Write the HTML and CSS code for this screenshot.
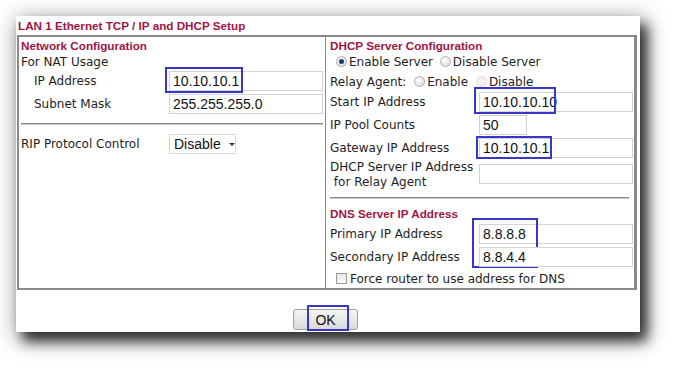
FILE: index.html
```html
<!DOCTYPE html>
<html lang="en">
<head>
<meta charset="UTF-8">
<title>LAN 1 Ethernet TCP / IP and DHCP Setup</title>
<link rel="stylesheet" href="styles.css">
</head>
<body>
<div class="page">
  <div class="card">
    <div class="title">LAN 1 Ethernet TCP / IP and DHCP Setup</div>

    <div class="panel">
      <!-- left: network / RIP -->
      <div class="col col-left">
        <div class="head">Network Configuration</div>
        <div class="line">For NAT Usage</div>
        <div class="row row-ip">
          <span class="lbl indent">IP Address</span>
          <span class="field">
            <input class="txt" type="text" value="10.10.10.1">
            <span class="mark mark-ip"></span>
          </span>
        </div>
        <div class="row row-mask">
          <span class="lbl indent">Subnet Mask</span>
          <span class="field"><input class="txt" type="text" value="255.255.255.0"></span>
        </div>
        <div class="rule rule-left"></div>
        <div class="row row-rip">
          <span class="lbl">RIP Protocol Control</span>
          <div class="select">Disable <span class="caret"></span></div>
        </div>
      </div>

      <!-- right: DHCP / DNS -->
      <div class="col col-right">
        <div class="head">DHCP Server Configuration</div>
        <div class="line radios">
          <span class="radio on"></span>Enable Server
          <span class="radio wide"></span>Disable Server
        </div>
        <div class="line relay">
          Relay Agent:
          <span class="radio gap"></span>Enable
          <span class="radio gap faint"></span>Disable
        </div>
        <div class="row row-start">
          <span class="lbl">Start IP Address</span>
          <span class="field">
            <input class="txt" type="text" value="10.10.10.10">
            <span class="mark mark-start"></span>
          </span>
        </div>
        <div class="row row-pool">
          <span class="lbl">IP Pool Counts</span>
          <span class="field"><input class="txt short" type="text" value="50"></span>
        </div>
        <div class="row row-gw">
          <span class="lbl">Gateway IP Address</span>
          <span class="field">
            <input class="txt" type="text" value="10.10.10.1">
            <span class="mark mark-gw"></span>
          </span>
        </div>
        <div class="row row-relay">
          <span class="lbl two">DHCP Server IP Address<br>&nbsp;for Relay Agent</span>
          <span class="field"><input class="txt" type="text" value=""></span>
        </div>
        <div class="rule rule-right"></div>
        <div class="head head-dns">DNS Server IP Address</div>
        <div class="row row-dns1">
          <span class="lbl">Primary IP Address</span>
          <span class="field">
            <input class="txt" type="text" value="8.8.8.8">
            <span class="mark mark-dns"></span>
          </span>
        </div>
        <div class="row row-dns2">
          <span class="lbl">Secondary IP Address</span>
          <span class="field"><input class="txt" type="text" value="8.8.4.4"></span>
        </div>
        <div class="line check">
          <span class="box"></span>Force router to use address for DNS
        </div>
      </div>
    </div>

    <div class="actions">
      <span class="field">
        <button class="btn" type="button">OK</button>
        <span class="mark mark-ok"></span>
      </span>
    </div>
  </div>
</div>
</body>
</html>
```

FILE: styles.css
```css
body {
  margin: 0;
  background: #fff;
  font-family: "DejaVu Sans", Verdana, sans-serif;
  font-size: 12px;
  color: #1e1e1e;
}
.page {
  padding: 16px 0 0 16px;
  height: 369px;
  box-sizing: border-box;
}
.card {
  width: 624px;
  height: 316px;
  background: #fff;
  box-shadow: 7px 9px 12px rgba(0,0,0,0.75), 3px 5px 22px 2px rgba(0,0,0,0.4);
}
.title {
  font: bold 11.7px "Liberation Sans", Arial, sans-serif;
  color: #a01445;
  padding: 2px 0 0 2px;
  height: 17px;
  line-height: 16px;
}
.panel {
  margin-left: 1px;
  width: 620px;
  height: 255px;
  box-sizing: border-box;
  border: 2px solid #8a8a8a;
  border-right-width: 3px;
  display: flex;
}
.col {
  box-sizing: border-box;
  padding-top: 1px;
}
.col-left {
  width: 307px;
  padding-left: 2px;
  border-right: 1px solid #8a8a8a;
}
.col-right {
  flex: 1;
  padding-left: 4px;
}
.head {
  font: bold 11.7px "Liberation Sans", Arial, sans-serif;
  color: #a01445;
  line-height: 16px;
}
.line {
  line-height: 16px;
  white-space: nowrap;
}
.row {
  display: flex;
  align-items: center;
}
.lbl {
  width: 148px;
  flex-shrink: 0;
  white-space: nowrap;
}
.col-right .lbl {
  width: 149px;
}
.indent {
  padding-left: 13px;
  box-sizing: border-box;
}
.field {
  position: relative;
  display: inline-block;
  line-height: 0;
}
.txt {
  box-sizing: border-box;
  width: 154px;
  height: 20px;
  margin: 0;
  padding: 0 3px;
  border: 1px solid #d3d3d3;
  border-radius: 0;
  background: #fff;
  font: 14px "Liberation Sans", Arial, sans-serif;
  color: #111;
  outline: none;
}
.txt.short {
  width: 48px;
}

/* left column spacing */
.row-ip { margin-top: 1px; }
.row-mask { margin-top: 3px; }
.rule {
  height: 1px;
  background: #8a8a8a;
  border-bottom: 1px solid #c8c8c8;
}
.rule-left {
  margin: 9px 2px 0 0;
}
.row-rip { margin-top: 9px; }
.select {
  box-sizing: border-box;
  width: 67px;
  height: 20px;
  border: 1px solid #d8d8d8;
  padding-left: 4px;
  display: flex;
  align-items: center;
  gap: 8px;
  font: 14px "Liberation Sans", Arial, sans-serif;
  color: #111;
}
.caret {
  width: 0;
  height: 0;
  border-left: 3px solid transparent;
  border-right: 3px solid transparent;
  border-top: 3px solid #333;
}

/* right column spacing */
.radios { padding-left: 6px; }
.relay { margin-top: 4px; }
.row-start { margin-top: 2px; }
.row-pool { margin-top: 3px; }
.row-gw { margin-top: 3px; }
.row-relay {
  margin-top: 2px;
  align-items: flex-start;
}
.row-relay .field { margin-top: 4px; }
.two { line-height: 15px; }
.rule-right { margin: 7px 5px 0 0; }
.head-dns { margin-top: 7px; }
.row-dns1 { margin-top: 2px; }
.row-dns2 { margin-top: 3px; }
.check {
  margin-top: 4px;
}

.radio {
  display: inline-block;
  box-sizing: border-box;
  width: 11px;
  height: 11px;
  border-radius: 50%;
  border: 1px solid #b0b0b0;
  background: radial-gradient(circle at 40% 35%, #fff, #d6d6d6);
  vertical-align: -1px;
  margin-right: 2px;
  position: relative;
}
.radio.gap { margin-left: 4px; }
.radio.wide { margin-left: 3px; }
.radio.faint { border-color: #dcdcdc; background: #f2f2f2; }
.radio.on::after {
  content: "";
  position: absolute;
  left: 2px;
  top: 2px;
  width: 5px;
  height: 5px;
  border-radius: 50%;
  background: #1d3f6e;
}
.box {
  display: inline-block;
  box-sizing: border-box;
  width: 11px;
  height: 11px;
  border: 1px solid #9a9a9a;
  background: linear-gradient(#e6e6e6, #fafafa);
  vertical-align: -1px;
  margin: 0 3px 0 6px;
}

/* annotation boxes */
.mark {
  position: absolute;
  border: 2px solid #3636c8;
}
.mark-ip { left: -4px; top: -4px; width: 74px; height: 22px; }
.mark-start { left: -5px; top: -5px; width: 78px; height: 23px; }
.mark-gw { left: -3px; top: -2px; width: 72px; height: 19px; }
.mark-dns { left: -7px; top: -6px; width: 62px; height: 46px; }
.mark-ok { left: 14px; top: -4px; width: 38px; height: 22px; }

.actions {
  margin-top: 19px;
  padding-right: 5px;
  display: flex;
  justify-content: center;
}
.btn {
  box-sizing: border-box;
  width: 65px;
  height: 21px;
  margin: 0;
  border: 1px solid #a0a0a0;
  border-radius: 3px;
  background: linear-gradient(#f5f5f5, #d9d9d9);
  font: 14px "Liberation Sans", Arial, sans-serif;
  color: #111;
  padding: 0;
}
```
